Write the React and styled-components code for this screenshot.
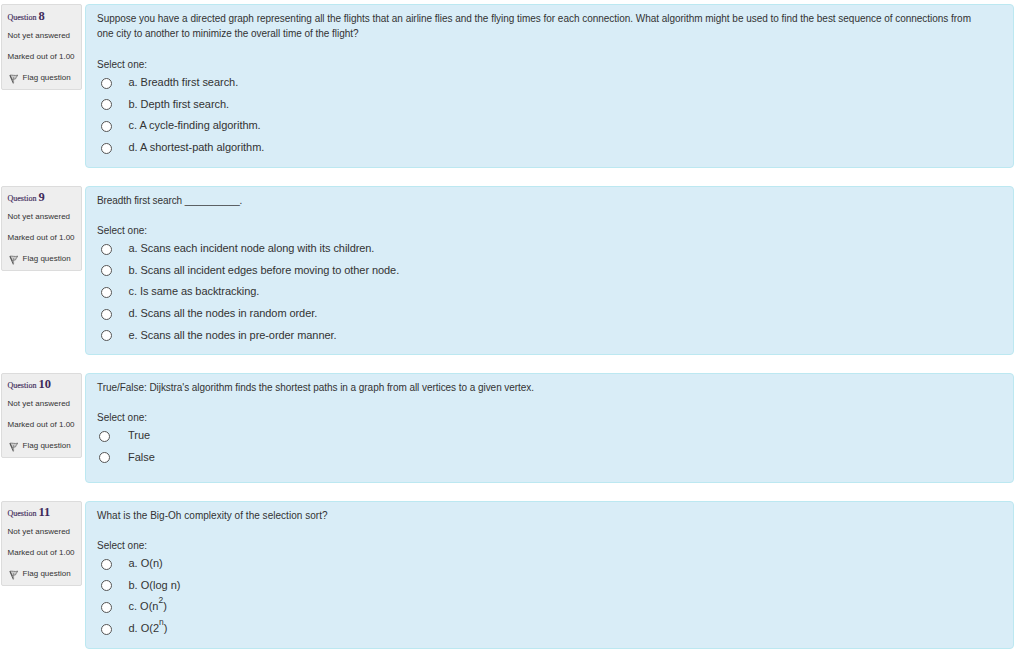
import React from "react";

import styled, { createGlobalStyle } from "styled-components";

const questions = [
  {
    number: 8,
    height: 164,
    first: true,
    spacing: "-0.04px",
    text: [
      {
        line: "Suppose you have a directed graph representing all the flights that an airline flies and the flying times for each connection. What algorithm might be used to find the best sequence of connections from",
        spacing: "-0.03px",
      },
      {
        line: "one city to another to minimize the overall time of the flight?",
        spacing: "-0.03px",
      },
    ],
    options: [
      "a. Breadth first search.",
      "b. Depth first search.",
      "c. A cycle-finding algorithm.",
      "d. A shortest-path algorithm.",
    ],
  },
  {
    number: 9,
    height: 169,
    spacing: "-0.07px",
    text: [{ line: "Breadth first search __________.", spacing: "-0.08px" }],
    options: [
      "a. Scans each incident node along with its children.",
      "b. Scans all incident edges before moving to other node.",
      "c. Is same as backtracking.",
      "d. Scans all the nodes in random order.",
      "e. Scans all the nodes in pre-order manner.",
    ],
  },
  {
    number: 10,
    height: 110,
    trueFalse: true,
    text: [
      {
        line: "True/False: Dijkstra's algorithm finds the shortest paths in a graph from all vertices to a given vertex.",
        spacing: "-0.05px",
      },
    ],
    options: ["True", "False"],
  },
  {
    number: 11,
    height: 148,
    text: [
      {
        line: "What is the Big-Oh complexity of the selection sort?",
        spacing: "0.03px",
      },
    ],
    options: [
      "a. O(n)",
      "b. O(log n)",
      <>
        c. O(n<sup>2</sup>)
      </>,
      <>
        d. O(2<sup>n</sup>)
      </>,
    ],
  },
];

function FlagIcon() {
  return (
    <svg width="10" height="10" viewBox="0 0 10 10" fill="none">
      <path
        d="M1 1.2C3.2 0.8 5.6 2 9 1.2C7.4 2.4 7 3.8 6.6 4.8C5.4 5.4 4.4 5 3 5.4Z"
        fill="#ccc"
        stroke="#777"
        strokeWidth="0.9"
      />
      <path d="M0.9 1.2L4.4 9.4" stroke="#555" strokeWidth="1.1" />
      <path d="M4.6 3V9.2" stroke="#888" strokeWidth="0.8" />
    </svg>
  );
}

function Question(props) {
  const { number, height, first, spacing, text, options, trueFalse } = props;

  return (
    <QuestionWrapper>
      <Info $first={first}>
        <Title $first={first}>
          Question <span>{number}</span>
        </Title>
        <InfoLine>Not yet answered</InfoLine>
        <InfoLine>Marked out of 1.00</InfoLine>
        <Flag>
          <FlagIcon />
          Flag question
        </Flag>
      </Info>
      <Content $height={height}>
        {text.map(({ line, spacing }) => (
          <TextLine key={line} $spacing={spacing}>
            {line}
          </TextLine>
        ))}
        <Prompt $first={first}>Select one:</Prompt>
        <Options $spacing={spacing}>
          {options.map((option, index) => (
            <Option key={index} $trueFalse={trueFalse}>
              <input type="radio" name={`q${number}`} />
              <span>{option}</span>
            </Option>
          ))}
        </Options>
      </Content>
    </QuestionWrapper>
  );
}

function App() {
  return (
    <Page>
      <GlobalStyle />
      {questions.map((question) => (
        <Question key={question.number} {...question} />
      ))}
    </Page>
  );
}

const GlobalStyle = createGlobalStyle`
  body {
    margin: 0;
    background: #fff;
    overflow: hidden;
  }
  * {
    box-sizing: border-box;
  }
`;

const Page = styled.main`
  display: flex;
  flex-direction: column;
  gap: 18px;
  width: 1024px;
  height: 654px;
  padding: 4px 10px 0 1px;
  overflow: hidden;
  font-family: "Liberation Sans", Arial, sans-serif;
  color: #333;
`;

const QuestionWrapper = styled.section`
  display: flex;
  align-items: flex-start;
  gap: 3px;
`;

const Info = styled.aside`
  width: 81px;
  height: ${(props) => (props.$first ? 86 : 85)}px;
  padding: ${(props) => (props.$first ? 4 : 3)}px 0 0 5.5px;
  border: 1px solid #dcdcdc;
  border-radius: 2px;
  background: #eee;
  font-size: 8px;
  letter-spacing: 0.02px;
  white-space: nowrap;
`;

const Title = styled.h3`
  height: 16px;
  margin: 0;
  font-family: "Liberation Serif", "Times New Roman", serif;
  font-size: 8px;
  line-height: 14px;
  font-weight: 400;
  letter-spacing: 0;
  color: #3f2a5a;
  -webkit-text-stroke: 0.15px #3f2a5a;
  span {
    font-size: 12.5px;
    font-weight: 700;
    -webkit-text-stroke: 0;
  }
`;

const InfoLine = styled.div`
  height: 21px;
  line-height: 21px;
`;

const Flag = styled.div`
  display: flex;
  align-items: center;
  gap: 3.5px;
  height: 21px;
  svg {
    margin: 3px 0 0 1.5px;
  }
`;

const Content = styled.div`
  width: 929px;
  height: ${(props) => props.$height}px;
  padding: 6px 11px 0;
  border: 1px solid #bce8f1;
  border-radius: 4px;
  background: #d9edf7;
`;

const TextLine = styled.div`
  height: 15px;
  font-size: 10px;
  line-height: 15px;
  letter-spacing: ${(props) => props.$spacing};
  white-space: nowrap;
`;

const Prompt = styled.div`
  margin-top: ${(props) => (props.$first ? 16 : 15)}px;
  font-size: 10px;
  line-height: 15px;
`;

const Options = styled.div`
  display: flex;
  flex-direction: column;
  letter-spacing: ${(props) => props.$spacing || "normal"};
`;

const Option = styled.label`
  display: flex;
  align-items: center;
  height: 21.6px;
  padding-left: ${(props) => (props.$trueFalse ? 2 : 4)}px;
  font-size: 11px;
  line-height: 21px;
  white-space: nowrap;
  input {
    appearance: none;
    flex: none;
    width: 11px;
    height: 11px;
    margin: 1px ${(props) => (props.$trueFalse ? 18 : 16.5)}px 0 0;
    border: 1px solid #555;
    border-radius: 50%;
    background: #fff;
  }
  sup {
    font-size: 8.5px;
    line-height: 0;
    vertical-align: 7px;
  }
`;

export default App;
